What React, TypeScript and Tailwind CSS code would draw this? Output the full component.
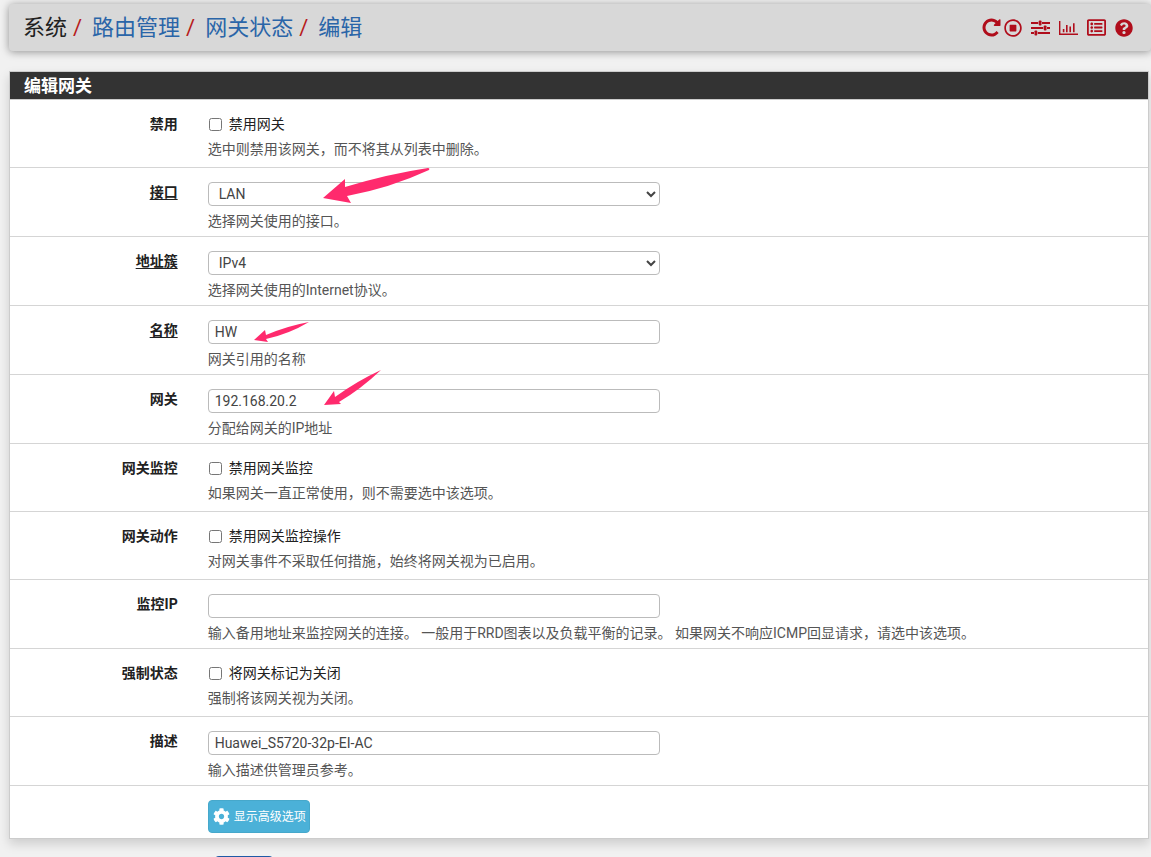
import type { ReactNode } from 'react';
import { FaCog, FaQuestionCircle, FaRegListAlt, FaRegStopCircle } from 'react-icons/fa';

interface RowProps {
  label: string;
  htmlFor: string;
  required?: boolean;
  children: ReactNode;
}

const inputClass =
  'block h-6 w-full rounded border border-[#bbb] bg-white px-1.5 text-sm text-[#444] outline-none';

function FormRow({ label, htmlFor, required, children }: RowProps) {
  return (
    <div className="flex border-b border-[#d5d5d5] pt-3.5">
      <div className="w-1/6 shrink-0 pr-[22px] text-right text-sm leading-5 font-bold text-[#212121]">
        <label htmlFor={htmlFor} className={required ? 'underline underline-offset-2' : ''}>
          {label}
        </label>
      </div>
      <div className="w-5/6 pl-2">{children}</div>
    </div>
  );
}

function FieldRow({ help, children, ...row }: RowProps & { help: string }) {
  return (
    <FormRow {...row}>
      <div className="w-1/2 pr-[18px]">{children}</div>
      <p className="mt-[5px] mb-[5px] text-sm leading-5 text-[#555]">{help}</p>
    </FormRow>
  );
}

function CheckRow({ id, label, text, help }: { id: string; label: string; text: string; help: string }) {
  return (
    <FormRow label={label} htmlFor={id}>
      <label className="flex h-5 items-center gap-[7px] text-sm leading-5 text-[#212121]">
        <input id={id} type="checkbox" className="ml-px size-[13px]" />
        {text}
      </label>
      <p className="mt-[5px] mb-2 text-sm leading-5 text-[#555]">{help}</p>
    </FormRow>
  );
}

function Slash() {
  return <span className="mr-2.5 ml-1.5 text-[#b71c1c]">/</span>;
}

function RepeatIcon() {
  return (
    <svg viewBox="0 0 1792 1792" className="size-[21px]" fill="currentColor" aria-hidden="true">
      <path d="M1664 256v448q0 26-19 45t-45 19h-448q-42 0-59-40-17-39 14-69l138-138q-148-137-349-137-104 0-198.5 40.5t-163.5 109.5-109.5 163.5-40.5 198.5 40.5 198.5 109.5 163.5 163.5 109.5 198.5 40.5q119 0 225-52t179-147q7-10 23-12 15 0 25 9l137 138q9 8 9.5 20.5t-7.5 22.5q-109 132-264 204.5t-327 72.5q-156 0-298-61t-245-164-164-245-61-298 61-298 164-245 245-164 298-61q147 0 284.5 55.5t244.5 156.5l130-129q29-31 70-14 39 17 39 59z" />
    </svg>
  );
}

function SlidersIcon() {
  return (
    <svg viewBox="0 0 19 18" className="h-[18px] w-[19px]" fill="currentColor" aria-hidden="true">
      <path d="M0 3h7.3v2H0zM11 3h8v2h-8zM0 8h12.3v2H0zM16 8h3v2h-3zM0 13h3v2H0zM6.7 13H19v2H6.7z" />
      <rect x="7.8" y="1.5" width="2.7" height="5" rx="0.8" />
      <rect x="12.8" y="6.5" width="2.7" height="5" rx="0.8" />
      <rect x="3.5" y="11.5" width="2.7" height="5" rx="0.8" />
    </svg>
  );
}

function ChartIcon() {
  return (
    <svg viewBox="0 0 19 18" className="h-[18px] w-[19px]" fill="currentColor" aria-hidden="true">
      <path d="M0 2h1.4v12.6H19V16H0zM3.8 10h1.6v3.2H3.8zM7 6h1.6v7.2H7zM10.4 7.6H12v5.6h-1.6zM14 4.2h1.6v9H14z" />
    </svg>
  );
}

export default function App() {
  return (
    <div
      lang="zh-CN"
      className="min-h-screen overflow-hidden bg-[#f1f1f1] pt-1 font-['Roboto','Noto_Sans_CJK_SC',sans-serif]"
    >
      <header className="ml-[9px] flex h-[47px] items-center justify-between rounded bg-[#d8d8d8] pr-[18px] pl-3.5 shadow-[0_1px_8px_rgba(0,0,0,0.4)]">
        <nav className="flex text-[22px] leading-7 text-[#212121]">
          <span>系统</span>
          <Slash />
          <a href="#routes" className="text-[#2a65a8]">路由管理</a>
          <Slash />
          <a href="#gateways" className="text-[#2a65a8]">网关状态</a>
          <Slash />
          <a href="#edit" className="text-[#2a65a8]">编辑</a>
        </nav>
        <div className="flex items-center gap-[9px] text-[#b00d1b]">
          <div className="flex items-center gap-0.5">
            <a href="#restart" aria-label="重启"><RepeatIcon /></a>
            <a href="#stop" aria-label="停止"><FaRegStopCircle className="size-[18px]" /></a>
          </div>
          <a href="#settings" aria-label="设置"><SlidersIcon /></a>
          <a href="#status" aria-label="状态"><ChartIcon /></a>
          <a href="#log" aria-label="日志"><FaRegListAlt className="size-[19px]" /></a>
          <a href="#help" aria-label="帮助"><FaQuestionCircle className="size-[18px]" /></a>
        </div>
      </header>

      <form className="mt-5 mr-0.5 ml-[9px] border border-[#ccc] bg-white shadow-[0_5px_10px_rgba(0,0,0,0.15)]">
        <h2 className="h-7 border-b border-[#ccc] bg-[#333] pl-3.5 text-[17px] leading-7 font-bold text-white">
          编辑网关
        </h2>

        <CheckRow id="disabled" label="禁用" text="禁用网关" help="选中则禁用该网关，而不将其从列表中删除。" />

        <FieldRow label="接口" htmlFor="interface" required help="选择网关使用的接口。">
          <select id="interface" className={inputClass}>
            <option>LAN</option>
          </select>
        </FieldRow>

        <FieldRow label="地址簇" htmlFor="ipprotocol" required help="选择网关使用的Internet协议。">
          <select id="ipprotocol" className={inputClass}>
            <option>IPv4</option>
          </select>
        </FieldRow>

        <FieldRow label="名称" htmlFor="name" required help="网关引用的名称">
          <input id="name" type="text" defaultValue="HW" className={inputClass} />
        </FieldRow>

        <FieldRow label="网关" htmlFor="gateway" help="分配给网关的IP地址">
          <input id="gateway" type="text" defaultValue="192.168.20.2" className={inputClass} />
        </FieldRow>

        <CheckRow id="monitor_disable" label="网关监控" text="禁用网关监控" help="如果网关一直正常使用，则不需要选中该选项。" />
        <CheckRow id="action_disable" label="网关动作" text="禁用网关监控操作" help="对网关事件不采取任何措施，始终将网关视为已启用。" />

        <FieldRow
          label="监控IP"
          htmlFor="monitor"
          help="输入备用地址来监控网关的连接。 一般用于RRD图表以及负载平衡的记录。 如果网关不响应ICMP回显请求，请选中该选项。"
        >
          <input id="monitor" type="text" className={inputClass} />
        </FieldRow>

        <CheckRow id="force_down" label="强制状态" text="将网关标记为关闭" help="强制将该网关视为关闭。" />

        <FieldRow label="描述" htmlFor="descr" help="输入描述供管理员参考。">
          <input id="descr" type="text" defaultValue="Huawei_S5720-32p-EI-AC" className={inputClass} />
        </FieldRow>

        <div className="flex pt-3.5 pb-[5px]">
          <div className="w-1/6 shrink-0" />
          <div className="w-5/6 pl-2">
            <button
              type="button"
              className="flex h-[33px] items-center gap-1 rounded-sm border border-[#46a8cb] bg-[#4bb1d8] pr-[3px] pl-1 text-xs text-white"
            >
              <FaCog className="size-[17px]" />
              显示高级选项
            </button>
          </div>
        </div>
      </form>

      <button type="submit" aria-label="保存" className="mt-[17px] ml-[215px] block h-8 w-[58px] rounded-sm bg-[#1f5aa6]" />

      {/* Arrows pointing at the fields to fill in */}
      <svg
        className="pointer-events-none absolute top-0 left-0 h-[420px] w-[440px]"
        viewBox="0 0 440 420"
        fill="#ff2a6d"
        aria-hidden="true"
      >
        <path d="M323 198 345 179 345 187Q388 174 428 168 430 168 429 170 390 188 347 196L351 203Z" />
        <path d="M254 340 265 330 266 335Q287 326 309 322 289 334 266 339L268 342Z" />
        <path d="M324 405 334 391 335 397Q357 381 381 370 361 389 339 402L341 404Z" />
      </svg>
    </div>
  );
}
